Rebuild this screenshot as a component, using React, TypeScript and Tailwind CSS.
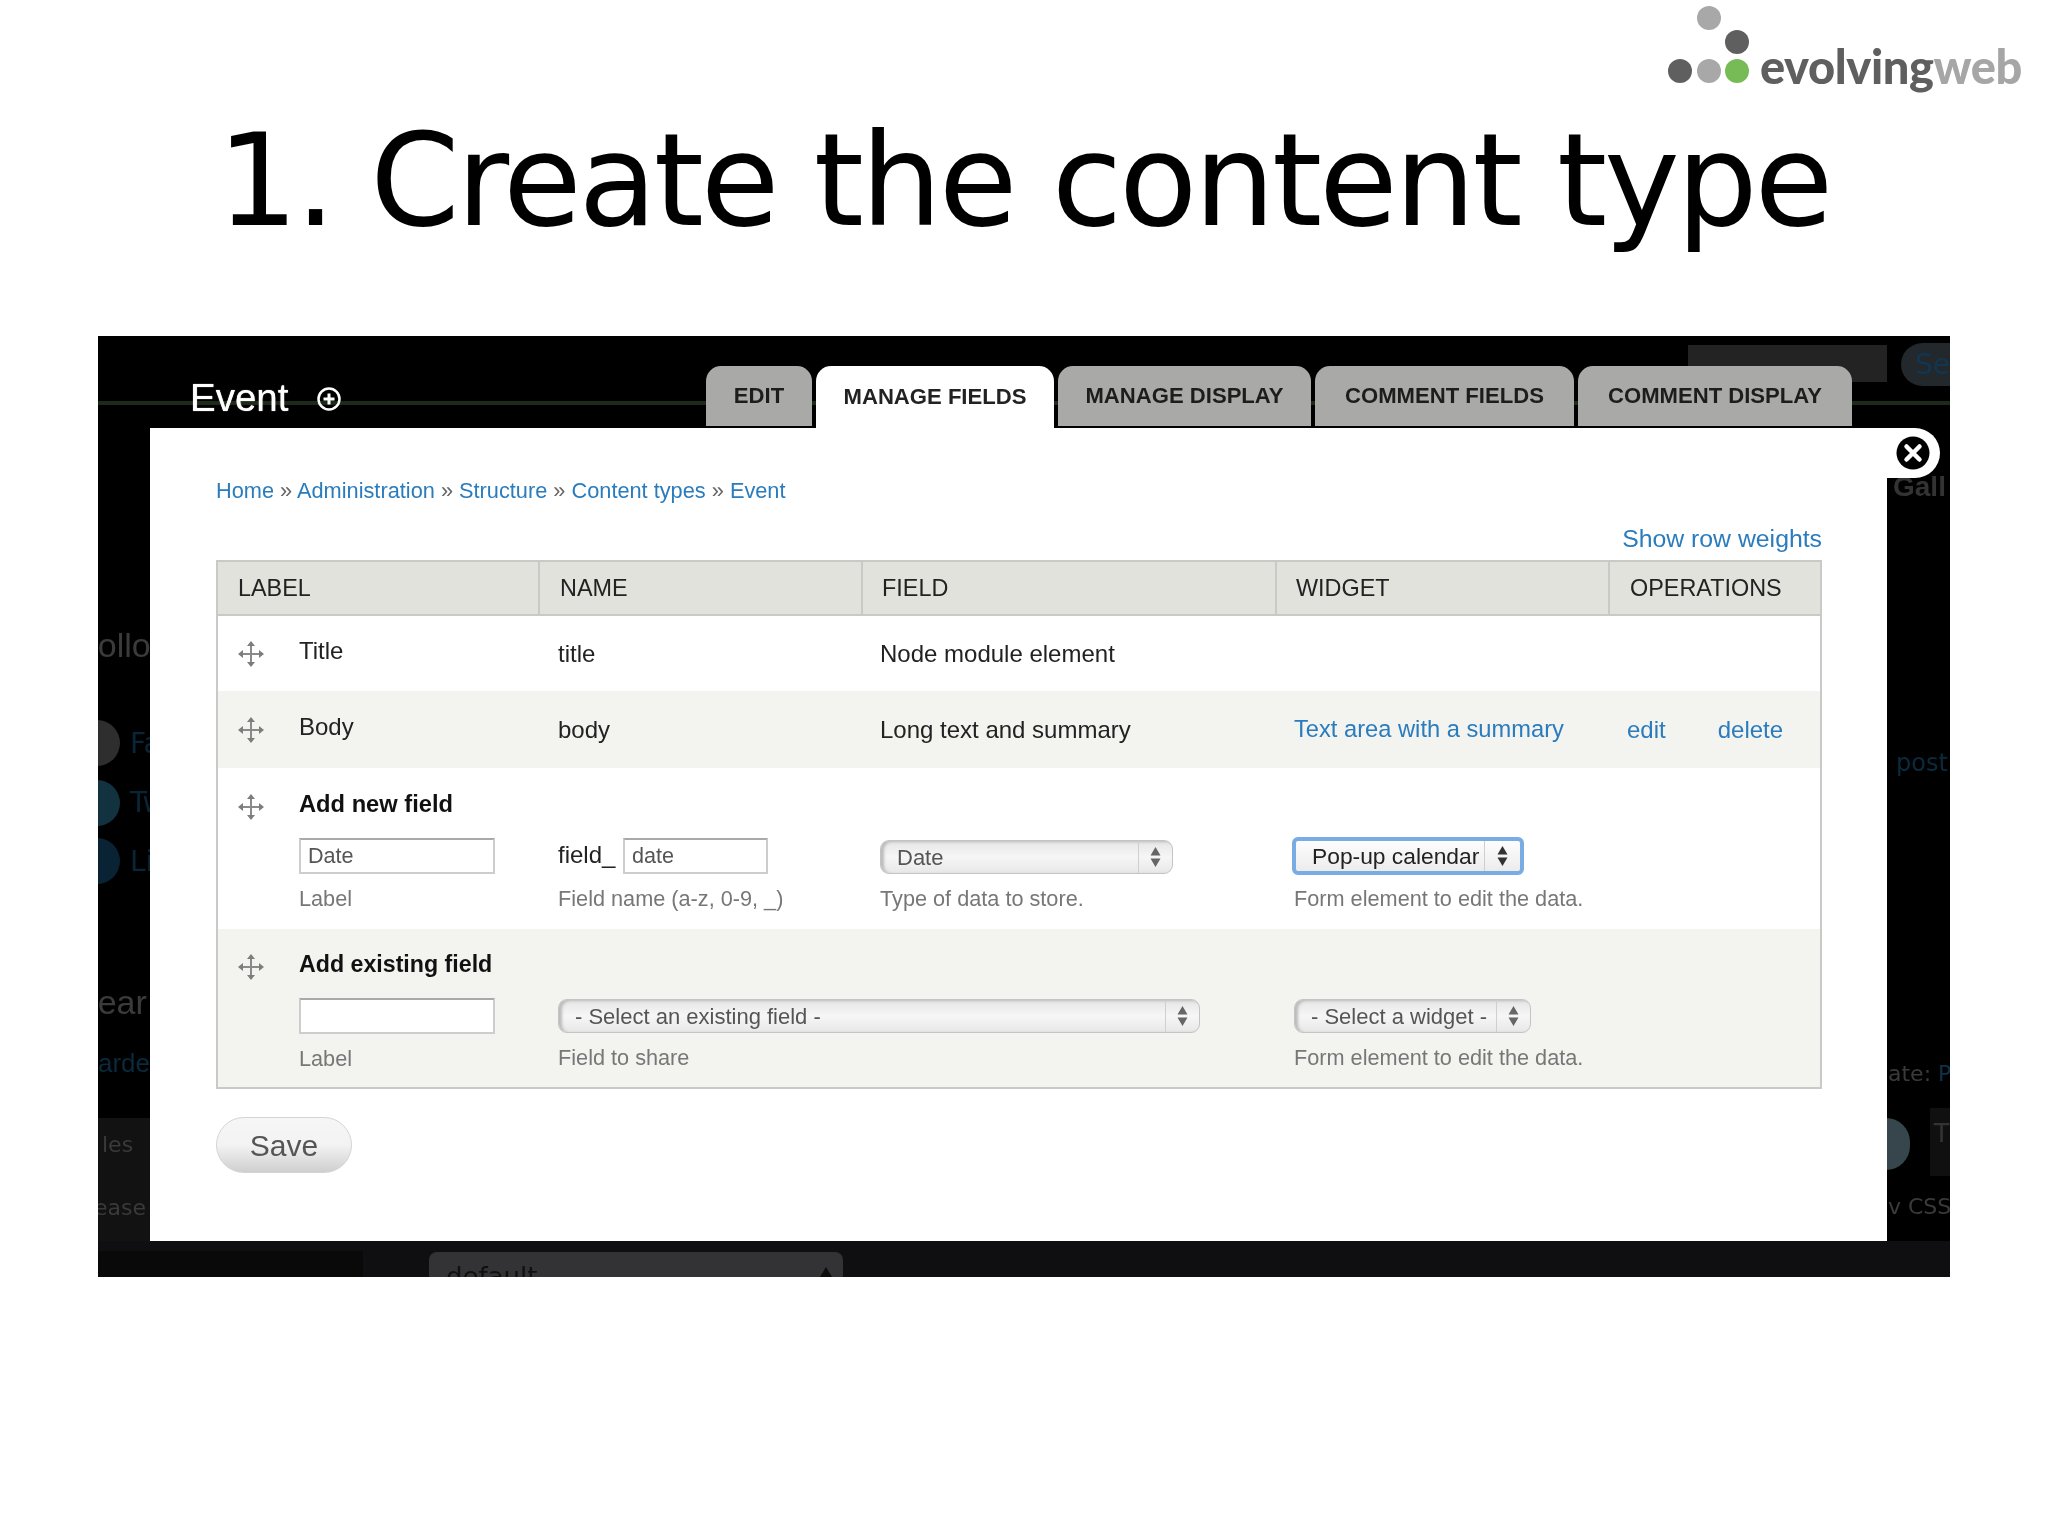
import React from "react";

const Move = () => (
  <svg width="26" height="26" viewBox="0 0 26 26" className="shrink-0">
    <path d="M13 4v18M4 13h18" stroke="#8a8a8a" strokeWidth="2" />
    <path d="M13 0l4 5H9zM13 26l4-5H9zM0 13l5-4v8zM26 13l-5-4v8z" fill="#7d7d7d" />
  </svg>
);

const Arrows = ({ color = "#555" }: { color?: string }) => (
  <svg width="11" height="22" viewBox="0 0 11 22">
    <path d="M5.5 1l5 8.5h-10zM5.5 21l5-8.5h-10z" fill={color} />
  </svg>
);

function Select({
  text,
  width,
  arrowWidth,
  focus,
}: {
  text: string;
  width: string;
  arrowWidth: string;
  focus?: boolean;
}) {
  return (
    <div
      className={`${width} ${
        focus
          ? "h-[38px] border-[4px] border-[#79ace3] rounded-[6px] text-[#222] text-[22.8px] bg-gradient-to-b from-[#fdfdfd] to-[#ececec]"
          : "h-[34px] mt-[2px] border border-[#c4c4c4] rounded-[9px] text-[#555] text-[22px] bg-gradient-to-b from-[#e6e6e6] via-[#f6f6f6] to-[#e8e8e8] shadow-[inset_3px_1px_3px_#bbb]"
      } flex items-center`}
    >
      <span className="flex-1 pl-[16px] whitespace-nowrap overflow-hidden">{text}</span>
      <span className={`${arrowWidth} h-full border-l border-[#cfcfcf] flex items-center justify-center`}>
        <Arrows color={focus ? "#333" : "#666"} />
      </span>
    </div>
  );
}

const Hint = ({ children }: { children: React.ReactNode }) => (
  <div className="mt-[10px] h-[30px] leading-[30px] text-[21.7px] text-[#777] whitespace-nowrap">{children}</div>
);

const TextBox = ({ value, width }: { value?: string; width: string }) => (
  <div
    className={`${width} h-[36px] bg-white border-2 border-[#cdcdcd] border-t-[#a9a9a9] pl-[7px] leading-[32px] text-[21.6px] text-[#555]`}
  >
    {value}
  </div>
);

const Faint = ({ className, children }: { className: string; children: React.ReactNode }) => (
  <div className={`absolute whitespace-nowrap ${className}`}>{children}</div>
);

const gridCols = "grid grid-cols-[320px_323px_414px_333px_1fr]";

function Tab({ label, width, active }: { label: string; width: string; active?: boolean }) {
  return (
    <div
      className={`${width} ${
        active ? "bg-white h-[64px] text-[#222] pb-[3px]" : "bg-[#a9aaa8] h-[60px] text-[#1d1d1d]"
      } rounded-t-[15px] flex items-center justify-center text-[22.1px] font-bold whitespace-nowrap`}
    >
      {label}
    </div>
  );
}

export default function App() {
  return (
    <div className="w-[2048px] h-[1536px] bg-white overflow-hidden font-['Liberation_Sans',sans-serif]">
      {/* logo */}
      <div className="h-[96px] flex justify-end items-start pr-[26px] blur-[0.4px]">
        <div className="flex items-start">
          <svg width="96" height="86" viewBox="0 0 96 86">
            <circle cx="41" cy="18" r="12" fill="#a8a8a8" />
            <circle cx="69" cy="42" r="12" fill="#5f5f5f" />
            <circle cx="12" cy="71" r="12" fill="#5f5f5f" />
            <circle cx="41" cy="71" r="12" fill="#a8a8a8" />
            <circle cx="69" cy="71" r="12" fill="#76bb55" />
          </svg>
          <div className="mt-[36px] ml-[-4px] h-[60px] leading-[60px] text-[47px] font-black tracking-[-0.4px] font-['Lato',sans-serif] text-[#5f5f5f]">
            evolving<span className="text-[#a6a6a6]">web</span>
          </div>
        </div>
      </div>

      {/* title */}
      <h1 className="h-[240px] pl-[217px] text-[128px] leading-[170px] tracking-[-3.2px] text-black font-['DejaVu_Sans',sans-serif] whitespace-nowrap">
        1. Create the content type
      </h1>

      {/* screenshot */}
      <div className="relative ml-[98px] w-[1852px] h-[941px] bg-black overflow-hidden blur-[0.5px]">
        <div className="absolute left-0 right-0 top-[65px] h-[4px] bg-[#1e2a19]" />
        <div className="absolute left-[1590px] top-[9px] w-[199px] h-[37px] bg-[#232323]" />
        <div className="absolute left-[1803px] top-[7px] w-[90px] h-[43px] rounded-full bg-[#22282c] pl-[14px] leading-[43px] text-[28px] text-[#123650] font-['DejaVu_Sans',sans-serif]">
          Sea
        </div>

        {/* faded page behind the overlay */}
        <Faint className="left-[-21px] top-[285px] text-[34px] leading-[48px] text-[#3b3b3b]">Follow</Faint>
        <div className="absolute left-[-24px] top-[384px] w-[46px] h-[46px] rounded-full bg-[#2e2e2e]" />
        <div className="absolute left-[-24px] top-[444px] w-[46px] h-[46px] rounded-full bg-[#123240]" />
        <div className="absolute left-[-24px] top-[502px] w-[46px] h-[46px] rounded-full bg-[#0a2334]" />
        <Faint className="left-[32px] top-[390px] text-[28px] leading-[36px] text-[#092638] font-['DejaVu_Sans',sans-serif]">Fa</Faint>
        <Faint className="left-[32px] top-[449px] text-[28px] leading-[36px] text-[#092638] font-['DejaVu_Sans',sans-serif]">Tw</Faint>
        <Faint className="left-[32px] top-[508px] text-[28px] leading-[36px] text-[#092638] font-['DejaVu_Sans',sans-serif]">Li</Faint>
        <Faint className="left-[-23px] top-[642px] text-[34px] leading-[48px] text-[#3b3b3b]">Sear</Faint>
        <Faint className="left-0 top-[710px] text-[26px] leading-[34px] text-[#0a2a3e]">arde</Faint>
        <div className="absolute left-0 top-[782px] w-[80px] h-[123px] bg-[#121213] rounded-tr-[12px]" />
        <Faint className="left-[4px] top-[792px] text-[22px] leading-[34px] text-[#3a3a3a] font-['DejaVu_Sans',sans-serif]">les</Faint>
        <Faint className="left-[-4px] top-[855px] text-[22px] leading-[34px] text-[#3a3a3a] font-['DejaVu_Sans',sans-serif]">ease</Faint>
        <div className="absolute left-0 right-0 top-[905px] h-[36px] bg-[#0f0f11]" />
        <div className="absolute left-0 top-[915px] w-[265px] h-[26px] bg-[#09090a]" />
        <div className="absolute left-[331px] top-[916px] w-[414px] h-[40px] rounded-[8px] bg-[#333335] pl-[17px] leading-[50px] text-[26px] text-[#101010] font-['DejaVu_Sans',sans-serif]">
          default
        </div>
        <svg className="absolute left-[721px] top-[931px]" width="14" height="12" viewBox="0 0 14 12">
          <path d="M7 0l6 10H1z" fill="#0c0c0c" />
        </svg>
        <Faint className="left-[1795px] top-[133px] text-[28px] leading-[36px] font-bold text-[#333]">Gall</Faint>
        <Faint className="left-[1798px] top-[410px] text-[24px] leading-[34px] text-[#0a2a3e] font-['DejaVu_Sans',sans-serif]">post</Faint>
        <Faint className="left-[1790px] top-[721px] text-[22px] leading-[34px] text-[#3a3a3a] font-['DejaVu_Sans',sans-serif]">
          ate: <span className="text-[#0c3349]">P</span>
        </Faint>
        <div className="absolute left-[1764px] top-[782px] w-[48px] h-[52px] rounded-full bg-[#36464c]" />
        <div className="absolute left-[1832px] top-[772px] w-[20px] h-[68px] bg-[#101010] text-[#333] text-[28px] leading-[50px] pl-[3px]">
          T
        </div>
        <Faint className="left-[1790px] top-[854px] text-[22px] leading-[34px] text-[#3a3a3a] font-['DejaVu_Sans',sans-serif]">v CSS</Faint>

        {/* heading and tabs */}
        <div className="relative h-[92px] flex items-start">
          <div className="w-[608px] pl-[92px] pt-[40px] flex items-center">
            <span className="text-[38.5px] leading-[44px] text-white [text-shadow:0_0_1px_#fff]">Event</span>
            <svg className="ml-[28px] mt-[1px]" width="26" height="26" viewBox="0 0 26 26">
              <circle cx="13" cy="13" r="10.5" fill="none" stroke="#fff" strokeWidth="2.5" />
              <path d="M13 7.5v11M7.5 13h11" stroke="#fff" strokeWidth="3" />
            </svg>
          </div>
          <div className="flex gap-1 pt-[30px] items-start">
            <Tab label="EDIT" width="w-[106px]" />
            <Tab label="MANAGE FIELDS" width="w-[238px]" active />
            <Tab label="MANAGE DISPLAY" width="w-[253px]" />
            <Tab label="COMMENT FIELDS" width="w-[259px]" />
            <Tab label="COMMENT DISPLAY" width="w-[274px]" />
          </div>
        </div>

        {/* overlay */}
        <div className="relative ml-[52px] w-[1737px] h-[813px] bg-white pl-[66px] pr-[65px] pt-[48px]">
          <div className="absolute left-[1737px] top-0 w-[53px] h-[50px] bg-white rounded-r-[25px] flex items-center justify-center">
            <svg width="34" height="34" viewBox="0 0 34 34" className="ml-[-1px]">
              <circle cx="17" cy="17" r="16.5" fill="#000" />
              <path d="M10.5 10.5l13 13M23.5 10.5l-13 13" stroke="#fff" strokeWidth="4.5" strokeLinecap="round" />
            </svg>
          </div>

          <div className="h-[30px] leading-[30px] text-[21.75px] text-[#2a7cbd] whitespace-nowrap">
            Home <span className="text-[#666]">»</span> Administration <span className="text-[#666]">»</span> Structure{" "}
            <span className="text-[#666]">»</span> Content types <span className="text-[#666]">»</span> Event
          </div>
          <div className="mt-[18px] mb-[6px] h-[30px] leading-[30px] text-[24.8px] text-[#2a7cbd] text-right whitespace-nowrap">
            Show row weights
          </div>

          {/* table */}
          <div className="border-2 border-[#c9c9c5]">
            <div className={`${gridCols} h-[54px] bg-[#e1e2dc] border-b-2 border-[#c9c9c5] text-[23.4px] leading-[52px] text-[#222]`}>
              <div className="pl-[20px]">LABEL</div>
              <div className="pl-[20px] border-l-2 border-[#c9c9c5]">NAME</div>
              <div className="pl-[19px] border-l-2 border-[#c9c9c5]">FIELD</div>
              <div className="pl-[19px] border-l-2 border-[#c9c9c5]">WIDGET</div>
              <div className="pl-[20px] border-l-2 border-[#c9c9c5]">OPERATIONS</div>
            </div>

            <div className={`${gridCols} h-[75px] items-center text-[24px] text-[#222]`}>
              <div className="flex items-center pl-[20px]">
                <Move />
                <span className="ml-[35px] mt-[-5px]">Title</span>
              </div>
              <div className="pl-[20px]">title</div>
              <div className="pl-[19px]">Node module element</div>
              <div />
              <div />
            </div>

            <div className={`${gridCols} h-[77px] items-center bg-[#f3f3f0] text-[24px] text-[#222]`}>
              <div className="flex items-center pl-[20px]">
                <Move />
                <span className="ml-[35px] mt-[-5px]">Body</span>
              </div>
              <div className="pl-[20px]">body</div>
              <div className="pl-[19px]">Long text and summary</div>
              <div className="pl-[19px] text-[#2a7cbd] text-[23.7px] whitespace-nowrap">Text area with a summary</div>
              <div className="pl-[19px] text-[#2a7cbd] flex gap-[52px]">
                <span>edit</span>
                <span>delete</span>
              </div>
            </div>

            <div className={`${gridCols} h-[161px] text-[24px] text-[#222]`}>
              <div className="pl-[20px] pt-[20px] flex items-start">
                <div className="mt-[6px]">
                  <Move />
                </div>
                <div className="ml-[35px] mt-[1px]">
                  <div className="h-[30px] leading-[30px] font-bold text-[23.7px] text-[#111] whitespace-nowrap">Add new field</div>
                  <div className="mt-[19px]">
                    <TextBox value="Date" width="w-[196px]" />
                    <Hint>Label</Hint>
                  </div>
                </div>
              </div>
              <div className="pl-[20px] pt-[70px]">
                <div className="flex items-center h-[36px]">
                  <span className="w-[65px] mt-[-3px]">field_</span>
                  <TextBox value="date" width="w-[145px]" />
                </div>
                <Hint>Field name (a-z, 0-9, _)</Hint>
              </div>
              <div className="pl-[19px] pt-[70px]">
                <Select text="Date" width="w-[293px]" arrowWidth="w-[34px]" />
                <Hint>Type of data to store.</Hint>
              </div>
              <div className="pl-[17px] pt-[69px]">
                <Select text="Pop-up calendar" width="w-[232px]" arrowWidth="w-[36px]" focus />
                <div className="pl-[2px] mt-[-1px]">
                  <Hint>Form element to edit the data.</Hint>
                </div>
              </div>
              <div />
            </div>

            <div className={`${gridCols} h-[158px] bg-[#f3f3f0] text-[24px] text-[#222]`}>
              <div className="pl-[20px] pt-[20px] flex items-start">
                <div className="mt-[5px]">
                  <Move />
                </div>
                <div className="ml-[35px] mt-[0px]">
                  <div className="h-[30px] leading-[30px] font-bold text-[23.2px] text-[#111] whitespace-nowrap">Add existing field</div>
                  <div className="mt-[19px]">
                    <TextBox width="w-[196px]" />
                    <Hint>Label</Hint>
                  </div>
                </div>
              </div>
              <div className="col-span-2 pl-[20px] pt-[68px]">
                <Select text="- Select an existing field -" width="w-[642px]" arrowWidth="w-[34px]" />
                <Hint>Field to share</Hint>
              </div>
              <div className="pl-[19px] pt-[68px]">
                <Select text="- Select a widget -" width="w-[237px]" arrowWidth="w-[34px]" />
                <Hint>Form element to edit the data.</Hint>
              </div>
              <div />
            </div>
          </div>

          <div className="mt-[28px] w-[136px] h-[56px] rounded-full border border-[#d4d4d4] bg-gradient-to-b from-[#f6f6f6] via-[#f3f3f3] to-[#cfcfcf] flex items-center justify-center text-[30px] text-[#555]">
            Save
          </div>
        </div>
      </div>
    </div>
  );
}
